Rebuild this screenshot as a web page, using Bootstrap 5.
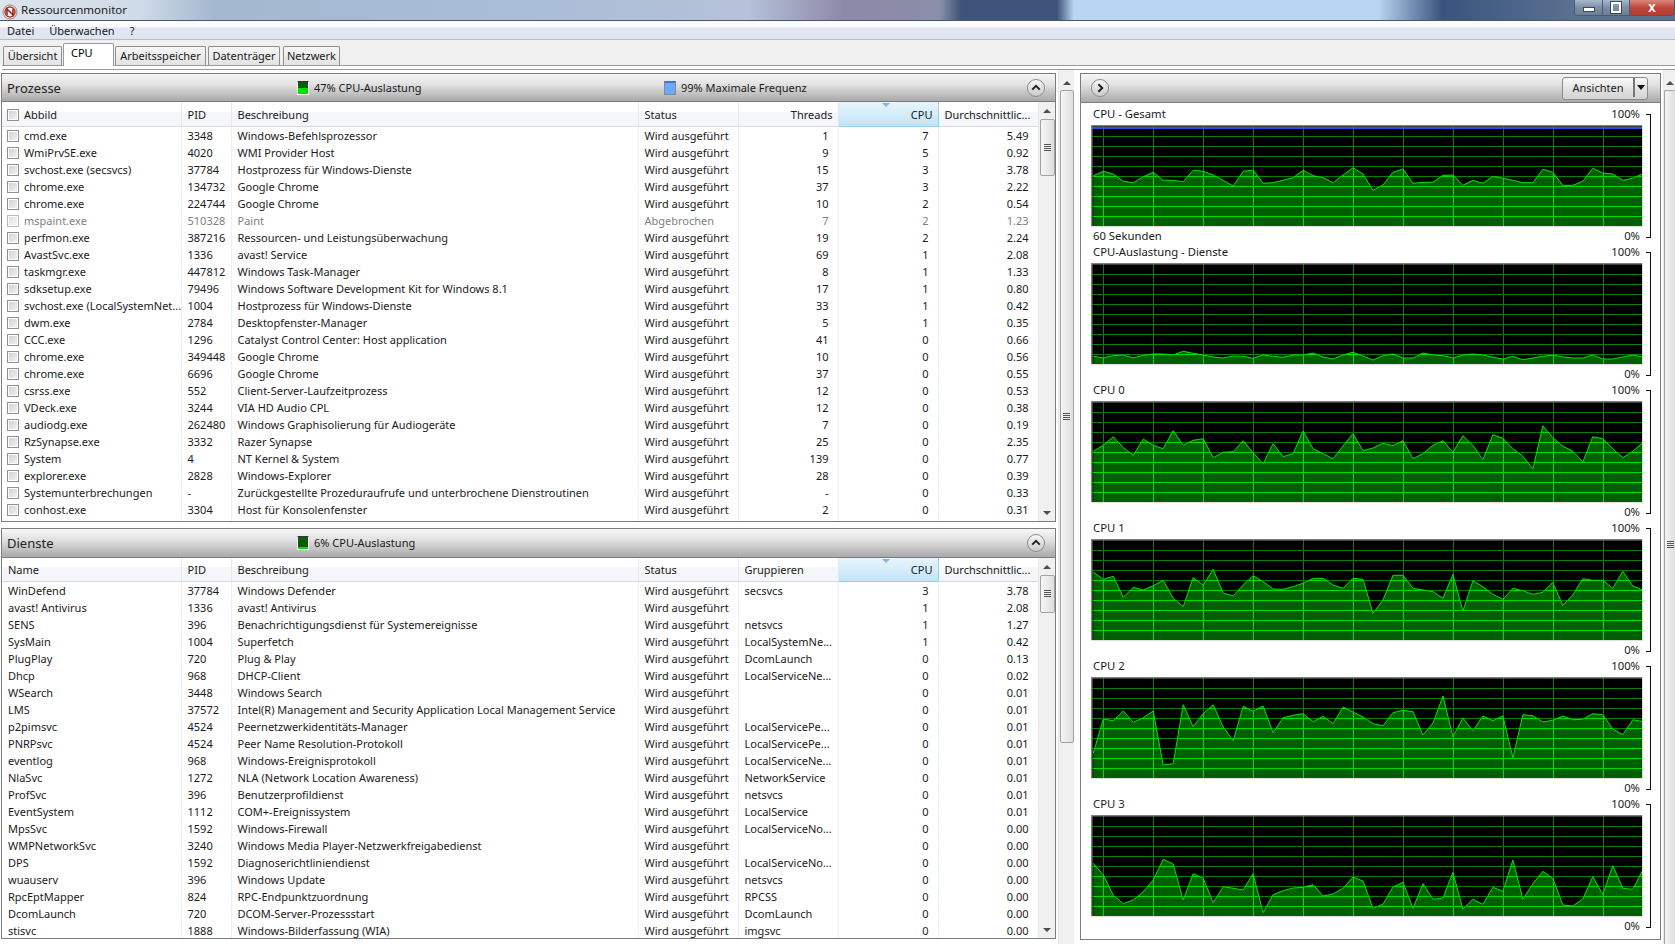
<!DOCTYPE html>
<html lang="de">
<head>
  <meta charset="UTF-8">
  <meta name="viewport" content="width=device-width, initial-scale=1.0">
  <title>Ressourcenmonitor</title>
  <link rel="stylesheet" href="https://cdn.jsdelivr.net/npm/bootstrap@5.3.0/dist/css/bootstrap.min.css">
  <style>
    html, body { height: 944px; overflow: hidden; }
    body { background: #fff; color: #1a1a1a; font-family: "Noto Sans", "Liberation Sans", sans-serif; font-size: 11px; line-height: 17px; }

    .win-title { height: 21px; border-bottom: 1px solid #4a5568; background: linear-gradient(90deg, #dde4ec 0, #cfdbe8 139px, #a4b8d0 214px, #a9bdd6 534px, #b6c2d8 748px, #8d88a8 844px, #8a8fa8 940px, #3d5478 961px, #3d5478 1057px, #b8d6f2 1074px, #b8d6f2 1378px, #39557d 1442px, #5a7090 1570px); padding-left: 2px; }
    .win-name { margin-left: 3px; line-height: 19px; font-size: 11.5px; }
    .win-btns { height: 16px; width: 101px; border: 1px solid #4c5a70; border-top: 0; border-radius: 0 0 4px 4px; overflow: hidden; }
    .win-btn { width: 28px; background: linear-gradient(#a9b8cb, #7c8ea6 50%, #6b7f99); border-right: 1px solid #4c5a70; }
    .win-btn.w-max { width: 27px; }
    .win-btn.w-close { flex: 1; border: 0; background: linear-gradient(#d9897c, #c0463a 50%, #b33b30); color: #fff; font-weight: 700; font-size: 11px; line-height: 15px; text-align: center; }
    .ico-min { width: 12px; height: 5px; background: #fff; border: 1px solid #3c4a5c; }
    .ico-max { width: 10px; height: 11px; background: transparent; border: 2px solid #fff; outline: 1px solid #3c4a5c; }

    .menu-strip { height: 19px; padding-left: 7px; gap: 15px; background: linear-gradient(#fbfcfe 0, #fbfcfe 30%, #e2e6f2 40%, #e0e5f1 100%); border-bottom: 1px solid #b3bacb; line-height: 20px; }

    .tab-strip { height: 25px; background: #f0f0f0; padding: 3px 0 0 3px; gap: 1px; border: 0; align-items: flex-end; }
    .tab-strip .nav-link { height: 19px; padding: 0; margin: 0; border: 1px solid #8e8e8e; border-bottom: 0; border-radius: 2px 2px 0 0; background: linear-gradient(#f6f6f6, #e3e3e3); color: #1a1a1a; line-height: 18px; text-align: center; }
    .tab-strip .nav-link.active { height: 23px; margin-bottom: -1px; background: #fff; border-color: #9a9a9a; position: relative; line-height: 17px; padding-left: 7px; text-align: left; }
    .tab-uebersicht { width: 59px; }
    .tab-cpu { width: 51px; }
    .tab-arbeit { width: 91px; }
    .tab-daten { width: 72px; margin-left: 1px !important; }
    .tab-netz { width: 57px; margin-left: 2px !important; }
    .tab-rule { height: 5px; margin-left: 2px; border-top: 1px solid #9a9a9a; border-bottom: 1px solid #9a9a9a; background: #fff; }

    .work { height: 875px; padding-left: 1px; }
    .left-col { width: 1055px; padding-top: 3px; flex: none; }
    .pane { border: 1px solid #7d7d7d; background: #fff; overflow: hidden; }
    .pane-a { height: 449px; }
    .pane-b { height: 411px; margin-top: 6px; }
    .pane-head { height: 29px; background: linear-gradient(#f7f7f7, #e0e0e0 40%, #a9a9a9); border-bottom: 1px solid #7d7d7d; display: grid; grid-template-columns: 295px 367px 1fr 20px; align-items: center; padding-right: 9px; }
    .pane-title { font-size: 13px; padding: 1px 0 0 5px; color: #222; }
    .load-box { width: 12px; height: 14px; margin-right: 5px; border: 1px solid #fff; border-top-color: #333; background: linear-gradient(#0c5c0c 0 6px, #00e000 6px); flex: none; }
    .load-box.low { background: linear-gradient(#0c5c0c 0 10px, #00e000 10px); }
    .load-box.freq { border: 1px solid #888; border-top: 2px solid #4c74b8; background: #6aa9ff; }
    .round-btn { display: block; }

    .grid-wrap { overflow: hidden; flex: 1; min-width: 0; }
    .grid-tbl { table-layout: fixed; width: 1036px; margin: 0; }
    .grid-tbl thead th { height: 24px; padding: 0 6px; font-weight: 400; color: #1a1a1a; background: linear-gradient(#fff 0, #fff 40%, #f4f6f9 41%, #f4f6f9 100%); border-right: 1px solid #e4e9f0; border-bottom: 1px solid #d6dbe2; line-height: 23px; box-shadow: none; }
    .grid-tbl tbody td { height: 17px; padding: 0 6px; border-right: 1px solid #e9f1fa; border-bottom: 0; line-height: 17px; color: #1a1a1a; white-space: nowrap; overflow: hidden; box-shadow: none; }
    .grid-tbl .num { text-align: right; padding-right: 9px; }
    .grid-tbl thead .num { padding-right: 5px; }
    .grid-tbl .cell-check { padding-left: 5px; padding-right: 0; }
    .grid-tbl thead th.sorted { position: relative; background: linear-gradient(#e6f4fc, #d9eefa 40%, #c2e4f6); border: 1px solid #97d1f2; border-top: 0; }
    .sort-mark { position: absolute; left: 43px; top: 1px; border-style: solid; border-width: 4px 4px 0; border-color: #7fb9dc transparent transparent; }
    .grid-tbl tbody tr.stopped td { color: #808080; }
    .form-check-input.row-check { width: 12px; height: 12px; margin: 0 5px 0 0; vertical-align: -2px; border: 1px solid #8e8f8f; border-radius: 0; background: linear-gradient(135deg, #cfcfcf, #f5f5f5); box-shadow: inset 0 0 0 1px #fff; float: none; }
    .stopped .row-check { opacity: .6; }

    .sbar { width: 17px; background: #f0f0f0; border-left: 1px solid #e8e8e8; flex: none; padding-top: 7px; padding-bottom: 6px; align-items: center; overflow: hidden; }
    .sbar-up { border-style: solid; border-width: 0 4px 4px; border-color: transparent transparent #4d4d4d; flex: none; }
    .sbar-down { border-style: solid; border-width: 4px 4px 0; border-color: #4d4d4d transparent transparent; margin-top: auto; }
    .sbar-thumb { width: 15px; border: 1px solid #a2a2a2; border-radius: 2px; background: linear-gradient(90deg, #f6f6f6, #dedede); flex: none; }
    .sbar-grip { width: 7px; height: 7px; background: repeating-linear-gradient(#555 0 1px, #eee 1px 2px); }
    .thumb-a { height: 57px; margin-top: 6px; }
    .thumb-b { height: 38px; margin-top: 6px; }
    .thumb-main { height: 653px; margin-top: 5px; }
    .thumb-side { height: 908px; margin-top: 5px; }
    .sbar-main { margin-left: 2px; width: 16px; height: 100%; }
    .sbar-main .sbar-thumb { width: 14px; }
    .sbar-side { margin-left: 2px; width: 12px; padding-left: 0; height: 100%; }
    .sbar-side .sbar-thumb { width: 11px; align-self: flex-end; border-right: 0; }

    .right-col { width: 581px; margin-left: 6px; margin-top: 3px; height: 867px; flex: none; }
    .graph-list { padding: 2px 0 0 10px; font-size: 11.3px; }
    .graph-block { height: 138px; }
    .graph-main { width: 552px; }
    .graph-top { height: 20px; line-height: 18px; padding: 0 3px 0 2px; }
    .graph-bottom { height: 16px; line-height: 17px; padding: 0 3px 0 2px; }
    .graph-svg { display: block; width: 552px; height: 102px; }
    .bracket { width: 5px; height: 124px; margin: 9px 0 0 3px; border: 1px solid #111; border-left: 0; }

    .view-btn { width: 86px; height: 23px; margin-right: -1px; padding: 0 0 2px; font-size: 11px; line-height: 19px; color: #1a1a1a; background: linear-gradient(#fafafa, #e4e4e4 50%, #d2d2d2); border: 1px solid #8a8a8a; border-radius: 3px; }
    .view-caret { width: 14px; border-left: 2px solid #777; height: 19px; }
    .view-caret i { border-style: solid; border-width: 5px 4px 0; border-color: #111 transparent transparent; }
    .right-head { height: 29px; padding: 0 13px 0 9px; background: linear-gradient(#f7f7f7, #e0e0e0 40%, #a9a9a9); border-bottom: 1px solid #7d7d7d; }
  </style>
</head>
<body>
  <div class="win-title d-flex align-items-start">
    <svg width="16" height="18" viewBox="0 0 16 18" class="mt-1">
      <circle cx="8" cy="8" r="7" fill="#f3f3f3" stroke="#8a8a8a"/>
      <circle cx="8" cy="8" r="5" fill="#fff" stroke="#b5342b" stroke-width="1.5"/>
      <path d="M5 11V5l6 6V5" fill="none" stroke="#a11a12" stroke-width="1.5"/>
    </svg>
    <span class="win-name">Ressourcenmonitor</span>
    <div class="win-btns d-flex ms-auto">
      <div class="win-btn d-flex align-items-center justify-content-center"><div class="ico-min mt-1"></div></div>
      <div class="win-btn w-max d-flex align-items-center justify-content-center"><div class="ico-max"></div></div>
      <div class="win-btn w-close">X</div>
    </div>
  </div>

  <div class="menu-strip d-flex">
    <span>Datei</span><span>Überwachen</span><span>?</span>
  </div>

  <ul class="nav nav-tabs tab-strip">
    <li class="nav-item"><a class="nav-link tab-uebersicht" href="#">Übersicht</a></li>
    <li class="nav-item"><a class="nav-link tab-cpu active" href="#">CPU</a></li>
    <li class="nav-item"><a class="nav-link tab-arbeit" href="#">Arbeitsspeicher</a></li>
    <li class="nav-item"><a class="nav-link tab-daten" href="#">Datenträger</a></li>
    <li class="nav-item"><a class="nav-link tab-netz" href="#">Netzwerk</a></li>
  </ul>
  <div class="tab-rule"></div>

  <div class="work d-flex">
    <div class="left-col">
      <section class="pane pane-a d-flex flex-column">
        <div class="pane-head">
          <span class="pane-title">Prozesse</span>
          <span class="d-flex align-items-center"><i class="load-box"></i>47% CPU-Auslastung</span>
          <span class="d-flex align-items-center"><i class="load-box freq"></i>99% Maximale Frequenz</span>
          <svg class="round-btn" width="20" height="20" viewBox="0 0 20 20"><use href="#round-up"/></svg>
        </div>
        <div class="d-flex flex-grow-1 overflow-hidden">
          <div class="grid-wrap">
            <table class="table table-borderless grid-tbl">
              <colgroup><col style="width:179px"><col style="width:50px"><col style="width:407px"><col style="width:100px"><col style="width:100px"><col style="width:100px"><col style="width:100px"></colgroup>
              <thead><tr>
                <th class="cell-check"><input type="checkbox" class="form-check-input row-check">Abbild</th><th>PID</th><th>Beschreibung</th><th>Status</th><th class="num">Threads</th>
                <th class="num sorted"><i class="sort-mark"></i>CPU</th><th>Durchschnittlic...</th>
              </tr></thead>
              <tbody id="proc-rows"></tbody>
            </table>
          </div>
          <div class="sbar d-flex flex-column">
            <i class="sbar-up"></i>
            <div class="sbar-thumb thumb-a d-flex align-items-center justify-content-center"><div class="sbar-grip"></div></div>
            <i class="sbar-down"></i>
          </div>
        </div>
      </section>

      <section class="pane pane-b d-flex flex-column">
        <div class="pane-head">
          <span class="pane-title">Dienste</span>
          <span class="d-flex align-items-center"><i class="load-box low"></i>6% CPU-Auslastung</span>
          <span></span>
          <svg class="round-btn" width="20" height="20" viewBox="0 0 20 20"><use href="#round-up"/></svg>
        </div>
        <div class="d-flex flex-grow-1 overflow-hidden">
          <div class="grid-wrap">
            <table class="table table-borderless grid-tbl">
              <colgroup><col style="width:179px"><col style="width:50px"><col style="width:407px"><col style="width:100px"><col style="width:100px"><col style="width:100px"><col style="width:100px"></colgroup>
              <thead><tr>
                <th>Name</th><th>PID</th><th>Beschreibung</th><th>Status</th><th>Gruppieren</th>
                <th class="num sorted"><i class="sort-mark"></i>CPU</th><th>Durchschnittlic...</th>
              </tr></thead>
              <tbody id="svc-rows"></tbody>
            </table>
          </div>
          <div class="sbar d-flex flex-column">
            <i class="sbar-up"></i>
            <div class="sbar-thumb thumb-b d-flex align-items-center justify-content-center"><div class="sbar-grip"></div></div>
            <i class="sbar-down"></i>
          </div>
        </div>
      </section>
    </div>

    <div class="sbar sbar-main d-flex flex-column">
      <i class="sbar-up mt-1"></i>
      <div class="sbar-thumb thumb-main d-flex align-items-center justify-content-center"><div class="sbar-grip"></div></div>
    </div>

    <section class="pane right-col">
      <div class="right-head d-flex align-items-center justify-content-between">
        <svg width="20" height="20" viewBox="0 0 20 20"><use href="#round-right"/></svg>
        <div class="btn view-btn d-flex align-items-center">
          <span class="flex-grow-1 text-center">Ansichten</span>
          <span class="view-caret d-flex align-items-center justify-content-center"><i></i></span>
        </div>
      </div>
      <div class="graph-list" id="graphs"></div>
    </section>

    <div class="sbar sbar-side d-flex flex-column">
      <i class="sbar-up mt-1"></i>
      <div class="sbar-thumb thumb-side d-flex align-items-center justify-content-center"><div class="sbar-grip"></div></div>
    </div>
  </div>

  <svg width="0" height="0" class="position-absolute">
    <defs>
      <linearGradient id="round-fill" x1="0" y1="0" x2="0" y2="1"><stop offset="0" stop-color="#fbfbfb"/><stop offset="1" stop-color="#c8c8c8"/></linearGradient>
      <g id="round-base"><circle cx="10" cy="10" r="8.5" fill="url(#round-fill)" stroke="#8c8c8c"/></g>
      <g id="round-up"><use href="#round-base"/><path d="M6.2 11.6 10 7.8l3.8 3.8" fill="none" stroke="#222" stroke-width="2"/></g>
      <g id="round-right"><use href="#round-base"/><path d="M8.4 6.2 12.2 10l-3.8 3.8" fill="none" stroke="#222" stroke-width="2"/></g>
    </defs>
  </svg>

  <script src="https://cdn.jsdelivr.net/npm/bootstrap@5.3.0/dist/js/bootstrap.bundle.min.js"></script>
  <script>
    const RUN = 'Wird ausgeführt';

    const processes = [
      ['cmd.exe', '3348', 'Windows-Befehlsprozessor', RUN, '1', '7', '5.49'],
      ['WmiPrvSE.exe', '4020', 'WMI Provider Host', RUN, '9', '5', '0.92'],
      ['svchost.exe (secsvcs)', '37784', 'Hostprozess für Windows-Dienste', RUN, '15', '3', '3.78'],
      ['chrome.exe', '134732', 'Google Chrome', RUN, '37', '3', '2.22'],
      ['chrome.exe', '224744', 'Google Chrome', RUN, '10', '2', '0.54'],
      ['mspaint.exe', '510328', 'Paint', 'Abgebrochen', '7', '2', '1.23'],
      ['perfmon.exe', '387216', 'Ressourcen- und Leistungsüberwachung', RUN, '19', '2', '2.24'],
      ['AvastSvc.exe', '1336', 'avast! Service', RUN, '69', '1', '2.08'],
      ['taskmgr.exe', '447812', 'Windows Task-Manager', RUN, '8', '1', '1.33'],
      ['sdksetup.exe', '79496', 'Windows Software Development Kit for Windows 8.1', RUN, '17', '1', '0.80'],
      ['svchost.exe (LocalSystemNet...', '1004', 'Hostprozess für Windows-Dienste', RUN, '33', '1', '0.42'],
      ['dwm.exe', '2784', 'Desktopfenster-Manager', RUN, '5', '1', '0.35'],
      ['CCC.exe', '1296', 'Catalyst Control Center: Host application', RUN, '41', '0', '0.66'],
      ['chrome.exe', '349448', 'Google Chrome', RUN, '10', '0', '0.56'],
      ['chrome.exe', '6696', 'Google Chrome', RUN, '37', '0', '0.55'],
      ['csrss.exe', '552', 'Client-Server-Laufzeitprozess', RUN, '12', '0', '0.53'],
      ['VDeck.exe', '3244', 'VIA HD Audio CPL', RUN, '12', '0', '0.38'],
      ['audiodg.exe', '262480', 'Windows Graphisolierung für Audiogeräte', RUN, '7', '0', '0.19'],
      ['RzSynapse.exe', '3332', 'Razer Synapse', RUN, '25', '0', '2.35'],
      ['System', '4', 'NT Kernel & System', RUN, '139', '0', '0.77'],
      ['explorer.exe', '2828', 'Windows-Explorer', RUN, '28', '0', '0.39'],
      ['Systemunterbrechungen', '-', 'Zurückgestellte Prozeduraufrufe und unterbrochene Dienstroutinen', RUN, '-', '0', '0.33'],
      ['conhost.exe', '3304', 'Host für Konsolenfenster', RUN, '2', '0', '0.31'],
      ['', '', '', '', '', '', '']
    ];

    const services = [
      ['WinDefend', '37784', 'Windows Defender', 'secsvcs', '3', '3.78'],
      ['avast! Antivirus', '1336', 'avast! Antivirus', '', '1', '2.08'],
      ['SENS', '396', 'Benachrichtigungsdienst für Systemereignisse', 'netsvcs', '1', '1.27'],
      ['SysMain', '1004', 'Superfetch', 'LocalSystemNe...', '1', '0.42'],
      ['PlugPlay', '720', 'Plug & Play', 'DcomLaunch', '0', '0.13'],
      ['Dhcp', '968', 'DHCP-Client', 'LocalServiceNe...', '0', '0.02'],
      ['WSearch', '3448', 'Windows Search', '', '0', '0.01'],
      ['LMS', '37572', 'Intel(R) Management and Security Application Local Management Service', '', '0', '0.01'],
      ['p2pimsvc', '4524', 'Peernetzwerkidentitäts-Manager', 'LocalServicePe...', '0', '0.01'],
      ['PNRPsvc', '4524', 'Peer Name Resolution-Protokoll', 'LocalServicePe...', '0', '0.01'],
      ['eventlog', '968', 'Windows-Ereignisprotokoll', 'LocalServiceNe...', '0', '0.01'],
      ['NlaSvc', '1272', 'NLA (Network Location Awareness)', 'NetworkService', '0', '0.01'],
      ['ProfSvc', '396', 'Benutzerprofildienst', 'netsvcs', '0', '0.01'],
      ['EventSystem', '1112', 'COM+-Ereignissystem', 'LocalService', '0', '0.01'],
      ['MpsSvc', '1592', 'Windows-Firewall', 'LocalServiceNo...', '0', '0.00'],
      ['WMPNetworkSvc', '3240', 'Windows Media Player-Netzwerkfreigabedienst', '', '0', '0.00'],
      ['DPS', '1592', 'Diagnoserichtliniendienst', 'LocalServiceNo...', '0', '0.00'],
      ['wuauserv', '396', 'Windows Update', 'netsvcs', '0', '0.00'],
      ['RpcEptMapper', '824', 'RPC-Endpunktzuordnung', 'RPCSS', '0', '0.00'],
      ['DcomLaunch', '720', 'DCOM-Server-Prozessstart', 'DcomLaunch', '0', '0.00'],
      ['stisvc', '1888', 'Windows-Bilderfassung (WIA)', 'imgsvc', '0', '0.00']
    ];

    const esc = s => s.replace(/&/g, '&amp;');

    document.getElementById('proc-rows').innerHTML = processes.map(p => `
      <tr class="${p[3] === 'Abgebrochen' ? 'stopped' : ''}">
        <td class="cell-check"><input type="checkbox" class="form-check-input row-check">${p[0]}</td>
        <td>${p[1]}</td><td>${esc(p[2])}</td><td>${p[3]}</td>
        <td class="num">${p[4]}</td><td class="num">${p[5]}</td><td class="num">${p[6]}</td>
      </tr>`).join('');

    document.getElementById('svc-rows').innerHTML = services.map(s => `
      <tr>
        <td>${s[0]}</td><td>${s[1]}</td><td>${esc(s[2])}</td><td>${RUN}</td><td>${s[3]}</td>
        <td class="num">${s[4]}</td><td class="num">${s[5]}</td>
      </tr>`).join('');

    // curve heights read off the reference, one per second, as y inside a 102px plot
    const toPlot = (vals, top) => vals.map(v => (v - top) / 3);
    const graphs = [
      { label: 'CPU - Gesamt', bottom: '60 Sekunden', blue: true, ys: toPlot([527,514,522,544,548,530,517,541,541,545,511,514,525,541,558,514,510,550,548,541,533,511,527,533,548,525,503,522,571,555,517,507,550,547,547,526,525,556,541,550,529,535,541,548,548,508,517,556,556,544,505,519,522,541,535,521], 375) },
      { label: 'CPU-Auslastung - Dienste', bottom: '', ys: toPlot([335,340,333,331,340,332,328,328,331,320,326,331,337,340,334,335,341,331,335,338,331,331,325,337,343,331,323,334,346,333,328,340,340,325,331,333,340,331,328,331,338,343,335,345,340,335,331,337,340,340,331,343,343,337,331,337], 55) },
      { label: 'CPU 0', bottom: '', ys: toPlot([213,195,169,202,225,176,195,205,151,195,180,175,232,216,214,181,217,250,190,229,220,152,205,220,235,197,160,211,203,189,196,181,235,220,195,181,216,166,195,238,163,174,205,228,265,136,172,197,213,245,169,175,205,232,213,187], 62) },
      { label: 'CPU 1', bottom: '', ys: toPlot([576,598,589,652,622,630,617,601,655,680,593,615,568,640,647,615,587,605,627,628,620,610,595,595,615,625,595,598,700,660,586,586,625,630,635,655,583,693,602,620,643,658,625,632,643,637,607,676,645,596,601,601,625,574,618,630], 477) },
      { label: 'CPU 2', bottom: '', ys: toPlot([278,176,181,152,186,172,152,314,310,133,199,160,133,200,241,138,153,137,217,172,165,160,184,168,190,140,155,170,190,196,157,150,154,224,188,107,229,173,211,167,181,167,292,163,166,185,180,167,178,177,160,163,206,223,178,184], 50) },
      { label: 'CPU 3', bottom: '', ys: toPlot([610,645,706,731,720,695,660,598,612,720,641,655,728,680,685,690,641,758,704,692,684,682,674,708,702,685,651,663,745,733,681,667,745,671,718,714,637,748,718,733,682,694,600,718,671,634,655,735,738,717,650,703,617,685,688,630], 465) }
    ];

    function gridLines(color) {
      let lines = '';
      for (let y = 11.5; y < 102; y += 10) lines += `<path d="M1 ${y}H552" stroke="${color}"/>`;
      for (let x = 12.5; x < 552; x += 50) lines += `<path d="M${x} 1V102" stroke="${color}"/>`;
      return lines;
    }

    function plotSvg(g, i) {
      const pts = g.ys.map((y, k) => `${(2.3 + k * 9.99).toFixed(1)},${y.toFixed(1)}`).join(' ');
      const area = `2.3,102 ${pts} 552,102`;
      const blue = g.blue ? '<rect x="1" y="2" width="551" height="2" fill="#2a4fe0"/>' : '';
      return `<svg class="graph-svg" viewBox="0 0 552 102">
        <rect width="552" height="102" fill="#000"/>
        ${gridLines('#0a7d0a')}
        ${blue}
        <clipPath id="under-${i}"><polygon points="${area}"/></clipPath>
        <polygon points="${area}" fill="#005f00"/>
        <g clip-path="url(#under-${i})">${gridLines('#00dc00')}</g>
        <polyline points="${pts}" fill="none" stroke="#00e600"/>
        <path d="M0 .75H552" stroke="#808080" stroke-width="1.5"/>
        <path d="M.75 0V102" stroke="#808080" stroke-width="1.5"/>
        <path d="M0 101.5H552M551.5 0V102" stroke="#e0e0e0"/>
      </svg>`;
    }

    document.getElementById('graphs').innerHTML = graphs.map((g, i) => `
      <div class="graph-block d-flex">
        <div class="graph-main">
          <div class="graph-top d-flex justify-content-between"><span>${g.label}</span><span>100%</span></div>
          ${plotSvg(g, i)}
          <div class="graph-bottom d-flex justify-content-between"><span>${g.bottom}</span><span>0%</span></div>
        </div>
        <div class="bracket"></div>
      </div>`).join('');
  </script>
</body>
</html>
